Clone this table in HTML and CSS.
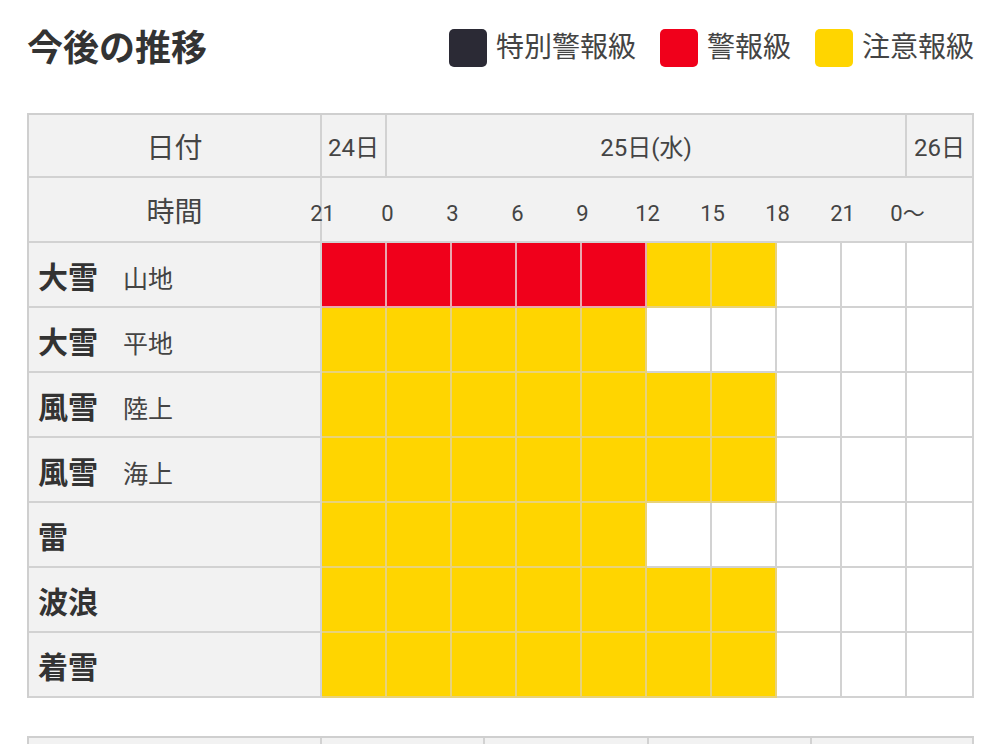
FILE: index.html
```html
<!DOCTYPE html>
<html lang="ja">
<head>
<meta charset="utf-8">
<title>今後の推移</title>
<link rel="stylesheet" href="styles.css">
</head>
<body>
<div class="page">
  <header class="top">
    <h1 class="title">今後の推移</h1>
    <ul class="legend">
      <li class="legend-item"><span class="swatch swatch-special"></span>特別警報級</li>
      <li class="legend-item"><span class="swatch swatch-warning"></span>警報級</li>
      <li class="legend-item"><span class="swatch swatch-advisory"></span>注意報級</li>
    </ul>
  </header>

  <table class="grid">
    <colgroup>
      <col class="col-label">
      <col class="col-slot"><col class="col-slot"><col class="col-slot"><col class="col-slot"><col class="col-slot">
      <col class="col-slot"><col class="col-slot"><col class="col-slot"><col class="col-slot"><col class="col-last">
    </colgroup>
    <thead>
      <tr class="row-date">
        <th class="head-label">日付</th>
        <th class="head-date">24日</th>
        <th class="head-date" colspan="8">25日(水)</th>
        <th class="head-date">26日</th>
      </tr>
      <tr class="row-time">
        <th class="head-label">時間</th>
        <th class="head-times" colspan="10">
          <div class="times">
            <span>21</span><span>0</span><span>3</span><span>6</span><span>9</span><span>12</span><span>15</span><span>18</span><span>21</span><span>0〜</span>
          </div>
        </th>
      </tr>
    </thead>
    <tbody>
      <tr>
        <th class="row-label"><span class="main">大雪</span><span class="sub">山地</span></th>
        <td class="r"></td><td class="r"></td><td class="r"></td><td class="r"></td><td class="r"></td><td class="y"></td><td class="y"></td><td></td><td></td><td></td>
      </tr>
      <tr>
        <th class="row-label"><span class="main">大雪</span><span class="sub">平地</span></th>
        <td class="y"></td><td class="y"></td><td class="y"></td><td class="y"></td><td class="y"></td><td></td><td></td><td></td><td></td><td></td>
      </tr>
      <tr>
        <th class="row-label"><span class="main">風雪</span><span class="sub">陸上</span></th>
        <td class="y"></td><td class="y"></td><td class="y"></td><td class="y"></td><td class="y"></td><td class="y"></td><td class="y"></td><td></td><td></td><td></td>
      </tr>
      <tr>
        <th class="row-label"><span class="main">風雪</span><span class="sub">海上</span></th>
        <td class="y"></td><td class="y"></td><td class="y"></td><td class="y"></td><td class="y"></td><td class="y"></td><td class="y"></td><td></td><td></td><td></td>
      </tr>
      <tr>
        <th class="row-label"><span class="main">雷</span></th>
        <td class="y"></td><td class="y"></td><td class="y"></td><td class="y"></td><td class="y"></td><td></td><td></td><td></td><td></td><td></td>
      </tr>
      <tr>
        <th class="row-label"><span class="main">波浪</span></th>
        <td class="y"></td><td class="y"></td><td class="y"></td><td class="y"></td><td class="y"></td><td class="y"></td><td class="y"></td><td></td><td></td><td></td>
      </tr>
      <tr>
        <th class="row-label"><span class="main">着雪</span></th>
        <td class="y"></td><td class="y"></td><td class="y"></td><td class="y"></td><td class="y"></td><td class="y"></td><td class="y"></td><td></td><td></td><td></td>
      </tr>
    </tbody>
  </table>

  <table class="grid grid-week">
    <colgroup>
      <col class="col-label">
      <col class="col-day"><col class="col-day"><col class="col-day"><col class="col-day-last">
    </colgroup>
    <thead>
      <tr class="row-date">
        <th class="head-label"></th>
        <th class="head-date"></th>
        <th class="head-date"></th>
        <th class="head-date"></th>
        <th class="head-date"></th>
      </tr>
    </thead>
  </table>
</div>
</body>
</html>
```

FILE: styles.css
```css
html, body {
  margin: 0;
  padding: 0;
  overflow: hidden;
  background: #ffffff;
}

body {
  font-family: Roboto, "Noto Sans CJK JP", "Noto Sans", sans-serif;
  color: #3a3a3a;
}

.page {
  padding: 0 25px 0 27px;
}

.top {
  display: flex;
  align-items: center;
  justify-content: space-between;
  height: 96px;
  margin-bottom: 17px;
}

.title {
  margin: 0;
  font-size: 36px;
  font-weight: 700;
  color: #333333;
  line-height: 1;
  padding-top: 2px;
}

.legend {
  display: flex;
  align-items: center;
  gap: 24px;
  margin: 0;
  padding: 0;
  list-style: none;
}

.legend-item {
  display: flex;
  align-items: center;
  gap: 9px;
  font-size: 28px;
  line-height: 1;
  color: #444444;
}

.swatch {
  display: block;
  width: 38px;
  height: 38px;
  border-radius: 5px;
}

.swatch-special { background: #2b2a35; }
.swatch-warning { background: #f0001b; }
.swatch-advisory { background: #ffd500; }

/* grid table */
.grid {
  table-layout: fixed;
  width: 947px;
  border-collapse: separate;
  border-spacing: 0;
  border-top: 2px solid #cfcfcf;
  border-left: 2px solid #cfcfcf;
}

.col-label { width: 293px; }
.col-slot { width: 65px; }
.col-last { width: 67px; }
.col-day { width: 163px; }
.col-day-last { width: 162px; }

.grid th,
.grid td {
  padding: 0;
  border-right: 2px solid #d2d2d2;
  border-bottom: 2px solid #d2d2d2;
  background: #ffffff;
  vertical-align: middle;
}

.grid tr { height: 65px; }
.grid .row-date { height: 63px; }

.grid th {
  background: #f2f2f2;
  font-weight: 400;
  color: #444444;
}

.head-label {
  font-size: 28px;
  text-align: center;
}

.head-date {
  font-size: 24px;
  text-align: center;
  padding-top: 4px;
}

.times {
  display: flex;
  align-items: baseline;
  margin-left: -32px;
  font-size: 22px;
  line-height: 30px;
  padding-top: 8px;
}

.times span {
  flex: 0 0 65px;
  text-align: center;
}

.row-label {
  text-align: left;
  padding-left: 9px !important;
  white-space: nowrap;
}

.row-label .main {
  font-size: 30px;
  font-weight: 700;
  color: #333333;
  margin-right: 25px;
}

.row-label .sub {
  font-size: 25px;
  color: #444444;
}

.grid td.r {
  background: #f0001b;
  border-color: #e9a8ae;
}

.grid td.y {
  background: #ffd500;
  border-color: #e8d27a;
}

.grid-week {
  margin-top: 38px;
}
```
